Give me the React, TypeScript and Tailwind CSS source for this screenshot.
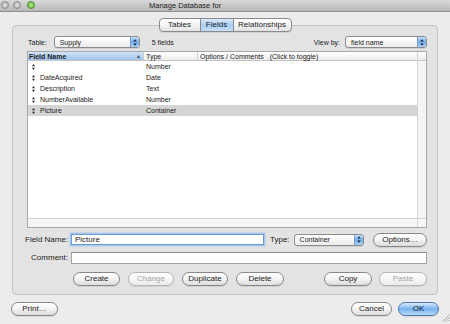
import React from "react";

type Field = { name: string; type: string; selected?: boolean };

const FIELDS: Field[] = [
  { name: "", type: "Number" },
  { name: "DateAcquired", type: "Date" },
  { name: "Description", type: "Text" },
  { name: "NumberAvailable", type: "Number" },
  { name: "Picture", type: "Container", selected: true },
];

// ── small drawings ──

function RowHandle() {
  return (
    <svg width="3" height="6" viewBox="0 0 3 6" className="ml-[1px] shrink-0">
      <path d="M1.5 0L3 2.2H0Z M1.5 6L3 3.8H0Z" fill="#2a2a2a" />
    </svg>
  );
}

function PopupArrows() {
  return (
    <svg width="4" height="7" viewBox="0 0 4 7">
      <path d="M2 0.3L3.8 2.6H0.2Z M2 6.7L3.8 4.4H0.2Z" fill="#1d2a3a" />
    </svg>
  );
}

function Light({ color }: { color: "gray" | "green" }) {
  return (
    <span
      className={`block h-[8px] w-[8px] rounded-full border ${
        color === "green"
          ? "border-[#4f8f34] bg-radial from-[#b8ec8c] to-[#54b12e]"
          : "border-[#8d8d8d] bg-radial from-[#e2e2e2] to-[#a9a9a9]"
      }`}
    />
  );
}

// ── controls ──

function Pill({
  label,
  className = "",
  disabled,
  primary,
}: {
  label: string;
  className?: string;
  disabled?: boolean;
  primary?: boolean;
}) {
  const look = primary
    ? "border-[#4c77ad] bg-linear-to-b from-[#d9eafc] via-[#79b2ee] to-[#b9dbfb] text-[#0c1a2b]"
    : disabled
    ? "border-[#b5b5b5] bg-linear-to-b from-white to-[#ececec] text-[#a5a5a5]"
    : "border-[#878787] bg-linear-to-b from-white via-[#f3f3f3] to-[#dcdcdc] text-[#1a1a1a]";
  return (
    <div
      className={`flex h-[14px] shrink-0 items-center justify-center rounded-full border text-[8px] leading-none shadow-[0_1px_0_rgba(0,0,0,0.08)] ${look} ${className}`}
    >
      {label}
    </div>
  );
}

function Popup({ value, className = "" }: { value: string; className?: string }) {
  return (
    <div
      className={`flex h-[12px] shrink-0 items-stretch overflow-hidden rounded-[3px] border border-[#8c8c8c] bg-linear-to-b from-white to-[#ebebeb] shadow-[0_1px_0_rgba(0,0,0,0.08)] ${className}`}
    >
      <div className="flex flex-1 items-center pl-[5px] text-[7px] leading-none">{value}</div>
      <div className="flex w-[9px] items-center justify-center border-l border-[#7c9cc4] bg-linear-to-b from-[#c4def9] via-[#73aeee] to-[#a9d0f7]">
        <PopupArrows />
      </div>
    </div>
  );
}

// ── field list ──

function FieldList() {
  return (
    <div className="ml-[2px] mt-[3px] flex h-[177px] flex-col border border-[#a7a7a7] bg-white">
      <div className="flex min-h-0 flex-1">
        <div className="flex flex-1 flex-col">
          {/* header */}
          <div className="flex h-[9px] shrink-0 border-b border-[#c4c4c4] text-[7px] leading-none">
            <div className="flex w-[115px] items-center justify-between bg-linear-to-b from-[#d3e5f8] to-[#9dc2ea] pl-[1px] pr-[2px] font-bold">
              <span>Field Name</span>
              <span className="text-[5px] text-[#3b4f66]">▲</span>
            </div>
            <div className="flex w-[54px] items-center border-l border-[#cfcfcf] bg-linear-to-b from-white to-[#ededed] pl-[2px]">
              Type
            </div>
            <div className="flex flex-1 items-center border-l border-[#cfcfcf] bg-linear-to-b from-white to-[#ededed] pl-[2px]">
              Options / Comments&nbsp;&nbsp;&nbsp;(Click to toggle)
            </div>
          </div>
          {/* rows */}
          {FIELDS.map((f, i) => (
            <div
              key={i}
              className={`flex h-[11px] shrink-0 items-center text-[7px] leading-none ${
                f.selected ? "bg-[#d5d5d5]" : ""
              }`}
            >
              <div className="flex w-[115px] items-center pl-[3px]">
                <RowHandle />
                <span className="ml-[5px]">{f.name}</span>
              </div>
              <div className="pl-[3px]">{f.type}</div>
            </div>
          ))}
        </div>
        <div className="flex w-[9px] flex-col border-l border-[#d3d3d3]">
          <div className="h-[9px] border-b border-[#c4c4c4] bg-linear-to-b from-white to-[#ececec]" />
          <div className="flex-1 bg-[#f5f5f5]" />
        </div>
      </div>
      <div className="flex h-[9px] shrink-0 border-t border-[#d2d2d2] bg-[#f6f6f6]">
        <div className="flex-1" />
        <div className="w-[9px] border-l border-[#d3d3d3]" />
      </div>
    </div>
  );
}

// ── page ──

export default function App() {
  return (
    <div className="relative flex h-[324px] w-[450px] flex-col overflow-hidden bg-[#ececec] font-['Liberation_Sans',Arial,sans-serif] text-[#1b1b1b]">
      {/* title bar */}
      <div className="flex h-[12px] shrink-0 items-center border-b border-[#8e8e8e] bg-linear-to-b from-[#dadada] to-[#b8b8b8]">
        <div className="flex self-start pl-[1px] pt-[1px]">
          <Light color="gray" />
          <span className="ml-[4px]">
            <Light color="gray" />
          </span>
          <span className="ml-[6px]">
            <Light color="green" />
          </span>
        </div>
        <span className="ml-[114px] text-[7.5px] leading-none text-[#222]">Manage Database for</span>
      </div>

      {/* tabs */}
      <div className="relative z-10 mt-[6px] flex h-[14px] shrink-0 justify-center">
        <div className="flex overflow-hidden rounded-[4px] border border-[#8a8a8a] bg-linear-to-b from-white via-[#f4f4f4] to-[#e2e2e2] text-[8px] leading-none shadow-[0_1px_0_rgba(0,0,0,0.08)]">
          <div className="flex w-[40px] items-center justify-center">Tables</div>
          <div className="flex w-[34px] items-center justify-center border-x border-[#8a8a8a] bg-linear-to-b from-[#dcebfb] via-[#a9cdf2] to-[#c6e0f9]">
            Fields
          </div>
          <div className="flex w-[57px] items-center justify-center">Relationships</div>
        </div>
      </div>

      {/* group box */}
      <div className="mx-[12px] -mt-[7px] flex flex-col rounded-[4px] border border-[#c4c4c4] bg-[#e3e3e3] pb-[8px] pl-[12px] pr-[10px] pt-[10px]">
        <div className="flex h-[12px] items-center text-[7px] leading-none">
          <span className="ml-[3px]">Table:</span>
          <Popup value="Supply" className="ml-[7px] w-[86px]" />
          <span className="ml-[12px]">5 fields</span>
          <span className="ml-auto">View by:</span>
          <Popup value="field name" className="ml-[5px] w-[82px]" />
        </div>

        <FieldList />

        <div className="mt-[5px] flex h-[13px] items-center text-[8px] leading-none">
          <span className="w-[43px] shrink-0 whitespace-nowrap text-right">Field Name:</span>
          <div className="ml-[3px] flex h-[11px] w-[193px] items-center border border-[#6a9ad6] bg-white pl-[3px] shadow-[0_0_0_1.5px_#a9c9ef]">
            Picture
          </div>
          <span className="ml-[6px]">Type:</span>
          <Popup value="Container" className="ml-[4px] w-[70px] text-[8px]" />
          <Pill label="Options…" className="ml-auto w-[54px]" />
        </div>

        <div className="mt-[6px] flex h-[12px] items-center text-[8px] leading-none">
          <span className="w-[43px] shrink-0 whitespace-nowrap text-right">Comment:</span>
          <div className="ml-[3px] h-[12px] flex-1 border border-[#a3a3a3] border-t-[#8c8c8c] bg-white" />
        </div>

        <div className="mt-[8px] flex h-[14px] items-center">
          <Pill label="Create" className="ml-[48px] w-[47px]" />
          <Pill label="Change" disabled className="ml-[8px] w-[46px]" />
          <Pill label="Duplicate" className="ml-[8px] w-[46px]" />
          <Pill label="Delete" className="ml-[8px] w-[48px]" />
          <Pill label="Copy" className="ml-auto w-[48px]" />
          <Pill label="Paste" disabled className="ml-[7px] w-[48px]" />
        </div>
      </div>

      {/* bottom buttons */}
      <div className="mt-[7px] flex h-[13px] items-center">
        <Pill label="Print…" className="ml-[11px] w-[47px]" />
        <Pill label="Cancel" className="ml-auto w-[41px]" />
        <Pill label="OK" primary className="ml-[6px] w-[41px]" />
        <svg width="9" height="9" viewBox="0 0 9 9" className="ml-[2px] mt-[18px] shrink-0">
          <path d="M8.5 1.5L1.5 8.5 M8.5 4.5L4.5 8.5 M8.5 7L7 8.5" stroke="#9a9a9a" strokeWidth="0.8" />
        </svg>
      </div>
    </div>
  );
}
